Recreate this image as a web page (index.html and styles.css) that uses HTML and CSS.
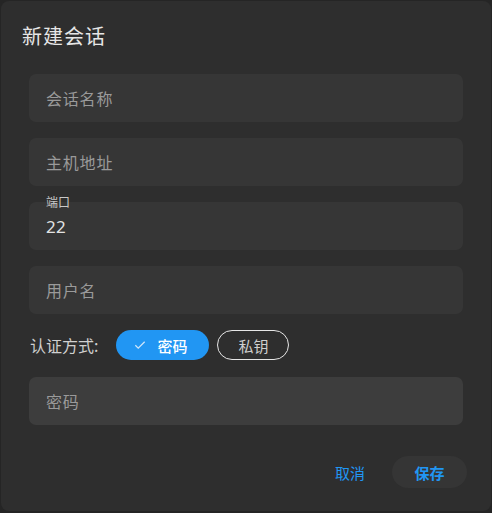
FILE: index.html
```html
<!DOCTYPE html>
<html lang="zh-CN">
<head>
<meta charset="utf-8">
<title>新建会话</title>
<link rel="stylesheet" href="styles.css">
</head>
<body>
<div class="dialog">
  <h2 class="dialog-title">新建会话</h2>
  <div class="dialog-body">
    <div class="field"><span class="placeholder">会话名称</span></div>
    <div class="field"><span class="placeholder">主机地址</span></div>
    <div class="field field-filled">
      <span class="field-label">端口</span>
      <span class="value">22</span>
    </div>
    <div class="field"><span class="placeholder">用户名</span></div>
    <div class="auth-row">
      <span class="auth-label">认证方式:</span>
      <span class="chip chip-selected">
        <svg class="chip-check" viewBox="0 0 24 24" width="14" height="14"><path d="M4 12.5l5 5L20 6.5" fill="none" stroke="currentColor" stroke-width="2.2"/></svg>
        密码
      </span>
      <span class="chip chip-outline">私钥</span>
    </div>
    <div class="field field-hover"><span class="placeholder">密码</span></div>
  </div>
  <div class="dialog-actions">
    <button class="btn btn-text">取消</button>
    <button class="btn btn-save">保存</button>
  </div>
</div>
</body>
</html>
```

FILE: styles.css
```css
* { box-sizing: border-box; }

html, body {
  margin: 0;
  height: 100%;
  background: #252525;
}

body {
  padding: 1px 1px 2px 1px;
  font-family: "Noto Sans CJK SC", "Noto Sans", Roboto, sans-serif;
}

.dialog {
  width: 490px;
  height: 510px;
  background: #2e2e2e;
  border-radius: 8px;
  display: flex;
  flex-direction: column;
  color: #e0e0e0;
}

.dialog-title {
  margin: 19px 0 0 0;
  padding: 0 0 0 21px;
  font-size: 20px;
  line-height: 32px;
  font-weight: 400;
  letter-spacing: 1px;
  color: #e6e6e6;
}

.dialog-body {
  margin-top: 22px;
  padding: 0 28px;
  display: flex;
  flex-direction: column;
  gap: 16px;
}

.field {
  position: relative;
  height: 48px;
  border-radius: 7px;
  background: #363636;
  display: flex;
  align-items: center;
  padding-left: 17px;
}

.field-hover {
  background: #3d3d3d;
  margin-top: 1px;
}

.placeholder {
  font-size: 16px;
  letter-spacing: 0.8px;
  color: #9a9a9a;
}

.value {
  font-size: 17px;
  color: #e2e2e2;
  font-family: "Noto Sans", Roboto, sans-serif;
  letter-spacing: 0.3px;
}

.field-label {
  position: absolute;
  left: 17px;
  top: -7px;
  font-size: 12px;
  line-height: 14px;
  color: #c8c8c8;
}

.auth-row {
  height: 30px;
  display: flex;
  align-items: center;
  padding-left: 1px;
}

.auth-label {
  font-size: 16px;
  color: #d0d0d0;
  margin-right: 18px;
}

.chip {
  height: 30px;
  border-radius: 15px;
  display: inline-flex;
  align-items: center;
  font-size: 15px;
}

.chip-selected {
  width: 93px;
  background: #2196f3;
  color: #ffffff;
  font-weight: 500;
  padding-left: 17px;
}

.chip-check {
  color: #cfe6fa;
  margin-right: 10px;
}

.chip-outline {
  width: 72px;
  margin-left: 8px;
  border: 1.5px solid #e6e6e6;
  color: #cfcfcf;
  justify-content: center;
}

.dialog-actions {
  margin-top: auto;
  margin-bottom: 23px;
  padding-right: 24px;
  display: flex;
  justify-content: flex-end;
  align-items: center;
}

.btn {
  font-family: inherit;
  font-size: 15px;
  border: none;
  background: none;
  color: #2196f3;
  height: 32px;
  cursor: pointer;
}

.btn-text {
  padding: 0 8px;
  margin-right: 19px;
}

.btn-save {
  width: 75px;
  border-radius: 16px;
  background: #353535;
  font-weight: 700;
  padding: 0;
}
```
